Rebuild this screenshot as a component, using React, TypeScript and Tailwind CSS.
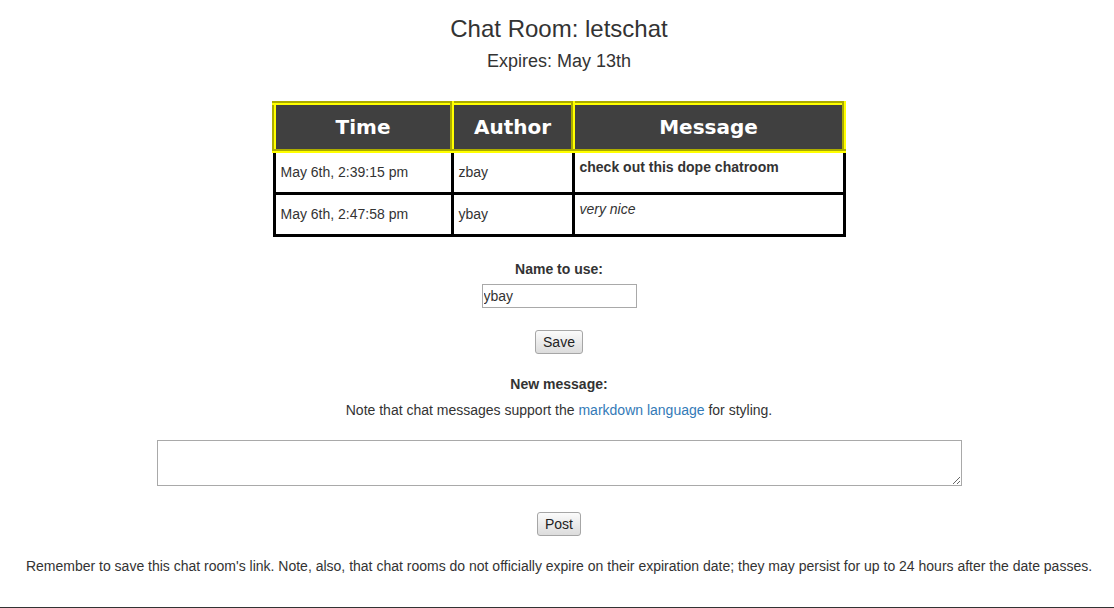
import React, { useState } from 'react';

interface ChatMessage {
  time: string;
  author: string;
  body: React.ReactNode;
}

const messages: ChatMessage[] = [
  { time: 'May 6th, 2:39:15 pm', author: 'zbay', body: <strong>check out this dope chatroom</strong> },
  { time: 'May 6th, 2:47:58 pm', author: 'ybay', body: <em>very nice</em> },
];

const thClass =
  'bg-[#404040] text-white font-bold text-[20px] text-center h-[48px] p-0 border-[4px] border-[#ffff00] [border-style:groove] [font-family:"DejaVu_Sans",Verdana,sans-serif]';
const tdClass = 'border-[3px] border-black px-[5px] py-[4px] align-middle text-[14px] leading-[20px]';
const btnClass =
  'h-[24px] px-[7px] text-[14px] text-[#222] border border-[#a6a6a6] rounded-[3px] bg-gradient-to-b from-[#fbfbfb] to-[#dcdcdc]';

export default function App() {
  const [name, setName] = useState('ybay');
  const [draft, setDraft] = useState('');

  return (
    <div className='min-h-[608px] pl-[4px] flex flex-col items-center text-[#333] text-[14px] leading-[20px] [font-family:"Liberation_Sans",Arial,sans-serif]'>
      <h3 className="mt-[16px] text-[24px] leading-[26px]">Chat Room: letschat</h3>
      <h4 className="mt-[9px] text-[18px] leading-[20px]">Expires: May 13th</h4>

      <table className="mt-[30px] w-[574px] border-collapse">
        <thead>
          <tr>
            <th className={`${thClass} w-[178px]`}>Time</th>
            <th className={`${thClass} w-[121px]`}>Author</th>
            <th className={thClass}>Message</th>
          </tr>
        </thead>
        <tbody>
          {messages.map((m, i) => (
            <tr key={i} className="h-[42px]">
              <td className={tdClass}>{m.time}</td>
              <td className={tdClass}>{m.author}</td>
              <td className={tdClass}>
                <p className="mb-[10px]">{m.body}</p>
              </td>
            </tr>
          ))}
        </tbody>
      </table>

      <label className="mt-[22px] font-bold">Name to use:</label>
      <input
        value={name}
        onChange={(e) => setName(e.target.value)}
        className="mt-[5px] w-[155px] h-[24px] px-[1px] text-[14px] border border-[#a9a9a9] outline-none"
      />
      <button className={`mt-[22px] ${btnClass}`}>Save</button>

      <label className="mt-[20px] font-bold">New message:</label>
      <p className="mt-[6px]">
        Note that chat messages support the{' '}
        <a href="#" className="text-[#337ab7]">markdown language</a> for styling.
      </p>
      <textarea
        value={draft}
        onChange={(e) => setDraft(e.target.value)}
        className="mt-[20px] w-[805px] h-[46px] border border-[#a9a9a9] outline-none"
      />
      <button className={`mt-[26px] ${btnClass}`}>Post</button>

      <p className="mt-[20px] text-center">
        Remember to save this chat room's link. Note, also, that chat rooms do not officially expire on their
        expiration date; they may persist for up to 24 hours after the date passes.
      </p>
      <div className="mt-auto -ml-[4px] w-[calc(100%+4px)] h-px bg-[#333]" />
    </div>
  );
}
